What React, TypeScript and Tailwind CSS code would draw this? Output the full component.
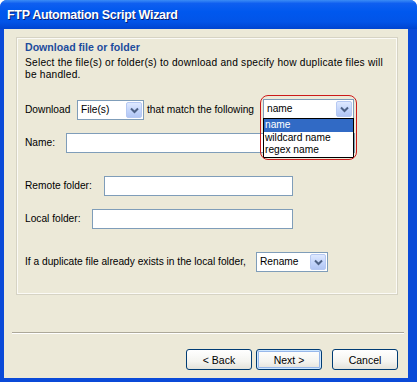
import React from "react";

const font = { fontFamily: '"Liberation Sans", Arial, sans-serif' };

function ComboArrow() {
  return (
    <span className="flex h-[16px] w-[16px] items-center justify-center rounded-[2px] border border-[#b6c9f3] bg-[linear-gradient(180deg,#dfe9ff_0%,#c3d5fb_55%,#b2c6f4_100%)]">
      <svg width="9" height="7" viewBox="0 0 9 7">
        <path d="M1 1.5 L4.5 5 L8 1.5" fill="none" stroke="#4d6185" strokeWidth="2" />
      </svg>
    </span>
  );
}

function Combo({ value, width }: { value: string; width: string }) {
  return (
    <div className={`flex h-[20px] ${width} shrink-0 items-center justify-between border border-[#7f9db9] bg-white pl-[3px] pr-[1px]`}>
      <span>{value}</span>
      <ComboArrow />
    </div>
  );
}

function Field({ width }: { width: string }) {
  return <div className={`h-[20px] ${width} shrink-0 border border-[#7f9db9] bg-white`} />;
}

function XpButton({ label, isDefault }: { label: string; isDefault?: boolean }) {
  return (
    <button
      className={`flex h-[21px] w-[66px] shrink-0 items-center justify-center rounded-[3px] border border-[#003c74] bg-[linear-gradient(180deg,#ffffff_0%,#f4f4f0_60%,#e3e2da_100%)] text-[10.5px] text-black ${
        isDefault ? "shadow-[inset_0_0_0_1px_#cee7ff,inset_0_0_0_2px_#98b8ea]" : ""
      }`}
    >
      {label}
    </button>
  );
}

export default function App() {
  return (
    <div className="h-[382px] w-[417px] overflow-hidden bg-white text-[10.2px] leading-[12px] text-black" style={font}>
      <div className="flex h-full flex-col rounded-t-[7px] bg-[#0a4ad8]">
        {/* title bar */}
        <div className="flex h-[29px] shrink-0 items-center rounded-t-[7px] bg-[linear-gradient(180deg,#3b8cf5_0%,#0f5ff0_12%,#0058ee_40%,#0254e8_75%,#0044d0_100%)] pl-[7px]">
          <span className="text-[12.5px] font-bold tracking-[-0.3px] text-white [text-shadow:1px_1px_0_#0a1e6e]">
            FTP Automation Script Wizard
          </span>
        </div>

        {/* body */}
        <div className="mb-[4px] ml-[4px] mr-[9px] flex flex-1 flex-col bg-[#ece9d8]">
          {/* panel */}
          <div className="ml-[13px] mt-[9px] h-[256px] w-[380px] shrink-0 whitespace-nowrap border border-[#fbfaf6] px-[7px] pt-[2px] outline outline-1 outline-[#d6d3c4]">
            <div className="text-[10.6px] font-bold text-[#1d4c9d]">Download file or folder</div>
            <div className="mt-[4px] tracking-[0.22px]">
              Select the file(s) or folder(s) to download and specify how duplicate files will
              <br />
              be handled.
            </div>

            <div className="mt-[19px] flex items-center">
              <span className="w-[52px] shrink-0">Download</span>
              <Combo value="File(s)" width="w-[67px]" />
              <span className="ml-[3px] w-[116px] shrink-0">that match the following</span>
              <div className="relative -mt-[2px]">
                <Combo value="name" width="w-[91px]" />
                <div className="absolute left-0 top-[19px] z-10 w-[91px] border border-black bg-white leading-[12.5px]">
                  <div className="bg-[#316ac5] pl-[1px] text-white">name</div>
                  <div className="pl-[1px]">wildcard name</div>
                  <div className="pl-[1px]">regex name</div>
                </div>
                <div className="absolute left-[-3px] top-[-4px] z-20 h-[65px] w-[97px] rounded-[8px] border-[1.5px] border-[#cc1a1a]" />
              </div>
            </div>

            <div className="mt-[13px] flex items-center">
              <span className="w-[41px] shrink-0">Name:</span>
              <Field width="w-[289px]" />
            </div>

            <div className="mt-[23px] flex items-center">
              <span className="w-[79px] shrink-0">Remote folder:</span>
              <Field width="w-[189px]" />
            </div>

            <div className="mt-[13px] flex items-center">
              <span className="w-[67px] shrink-0">Local folder:</span>
              <Field width="w-[201px]" />
            </div>

            <div className="mt-[23px] flex items-center">
              <span className="w-[231px] shrink-0">If a duplicate file already exists in the local folder,</span>
              <Combo value="Rename" width="w-[72px]" />
            </div>
          </div>

          {/* separator */}
          <div className="ml-[8px] mt-[38px] h-[2px] w-[392px] shrink-0 border-b border-t border-[#aca899] border-b-white" />

          {/* buttons */}
          <div className="mt-[15px] flex pl-[182px]">
            <XpButton label="< Back" />
            <div className="ml-[4px]">
              <XpButton label="Next >" isDefault />
            </div>
            <div className="ml-[10px]">
              <XpButton label="Cancel" />
            </div>
          </div>
        </div>
      </div>
    </div>
  );
}
